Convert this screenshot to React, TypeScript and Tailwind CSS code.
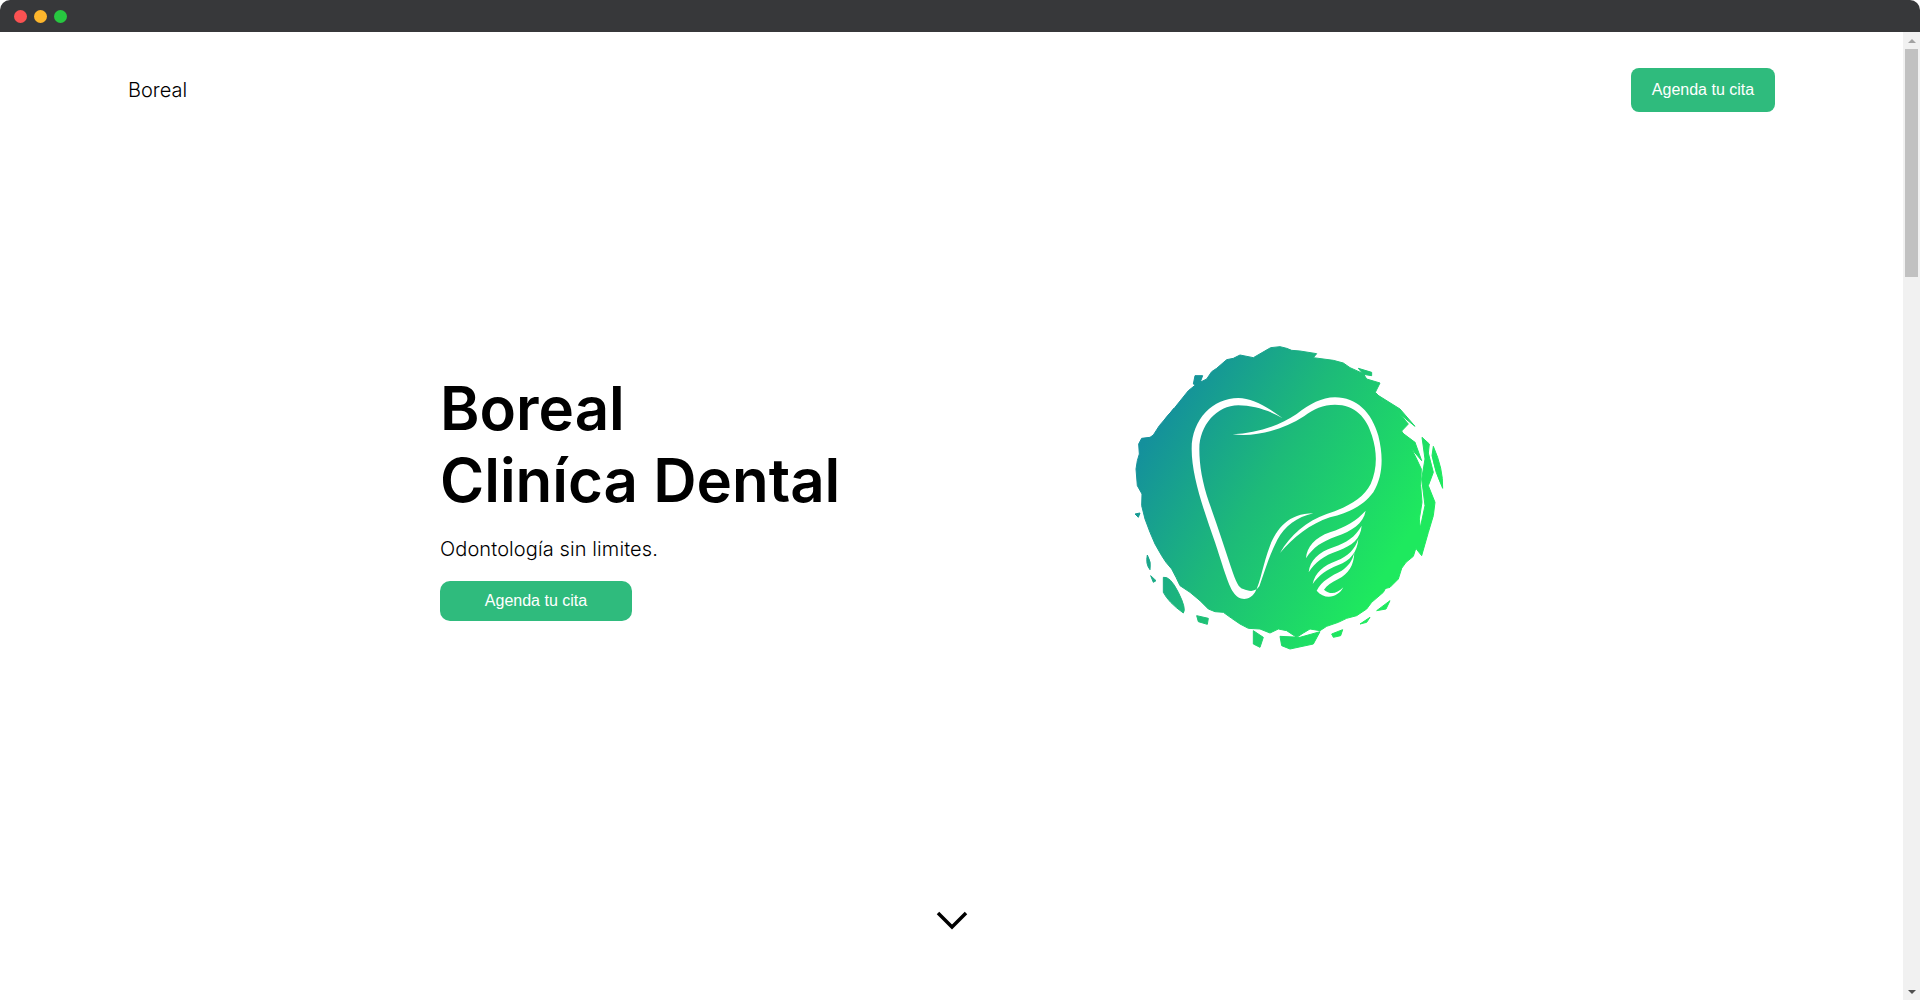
function CtaButton({ className }: { className: string }) {
    return (
        <button className={`bg-[#2fbb7d] text-white text-base font-['Liberation_Sans',Arial,sans-serif] ${className}`}>
            Agenda tu cita
        </button>
    );
}

// traced by hand from the logo, coordinates are 3x the on-screen pixels
function BorealLogo() {
    return (
        <svg viewBox="0 0 1110 990" className="w-[370px] h-[330px] shrink-0">
            <defs>
                <linearGradient id="boreal" gradientUnits="userSpaceOnUse" x1="190" y1="240" x2="900" y2="660">
                    <stop offset="0" stopColor="#14909c" />
                    <stop offset="0.45" stopColor="#1dba79" />
                    <stop offset="1" stopColor="#1ee95e" />
                </linearGradient>
            </defs>
            <g fill="url(#boreal)" stroke="url(#boreal)" strokeWidth="3" strokeLinejoin="round">
                <path d="M498 64 L512 56 L540 53 L560 58 L575 64 L600 66 L650 74 L640 86 L700 94 L730 102 L750 116 L790 134 L800 150 L840 162 L826 190 L850 215 L880 236 L895 250 L925 285 L905 306 L925 340 L950 390 L964 420 L962 470 L966 520 L958 570 L962 610 L950 650 L940 682 L918 700 L905 718 L880 750 L862 768 L850 790 L815 820 L800 840 L770 860 L740 868 L715 880 L680 892 L660 905 L630 900 L610 912 L590 925 L560 905 L535 900 L510 912 L480 900 L445 898 L420 885 L395 868 L370 850 L345 848 L325 840 L300 815 L270 790 L240 770 L228 745 L215 720 L198 700 L185 680 L165 645 L150 610 L135 570 L125 530 L126 495 L112 470 L108 420 L112 395 L118 375 L116 345 L125 328 L150 325 L160 318 L178 290 L195 270 L225 235 L245 210 L265 185 L290 165 L320 150 L335 128 L350 118 L380 92 L400 88 L420 78 L460 86 Z" />
                <path d="M1000 352 Q1030 420 1028 478 Q1005 430 996 380 Z" />
                <path d="M966 325 L988 345 L985 372 L1000 430 L985 470 L1005 520 L1000 560 L985 610 L965 680 L945 655 L960 600 L975 530 L965 450 L975 390 Z" />
                <path d="M905 310 L945 340 L965 395 L935 360 Z" />
                <path d="M142 678 Q155 700 150 722 Q136 705 142 678 Z" />
                <path d="M152 740 L168 755 L160 760 Z" />
                <path d="M190 745 Q210 740 235 790 Q260 840 250 852 Q205 820 190 790 Z" />
                <path d="M290 860 L325 868 L322 886 L295 878 Z" />
                <path d="M285 140 L308 140 L295 175 L280 165 Z" />
                <path d="M195 270 L222 238 L210 265 L192 285 Z" />
                <path d="M460 905 L490 925 L480 955 L460 945 Z" />
                <path d="M540 922 L600 925 L660 908 L640 945 L570 960 L545 950 Z" />
                <path d="M695 915 L728 902 L722 920 L700 925 Z" />
                <path d="M775 118 L815 130 L815 140 L790 136 Z" />
                <path d="M700 155 L735 165 L725 172 Z" />
                <path d="M830 845 L870 815 L858 840 Z" />
                <path d="M780 885 L810 865 L800 880 Z" />
                <path d="M850 780 L905 718 L895 750 L870 775 Z" />
                <path d="M105 555 L120 552 L115 565 Z" />
                <path d="M828 195 L900 240 L945 292 L880 240 Z" />
            </g>
            <g fill="#fff">
                <path d="M548 268 C500 232 455 207 415 207 C340 207 275 270 275 360 C275 440 310 540 345 640 C365 700 385 770 400 790 C415 815 448 818 465 790 C482 760 490 700 510 650 C530 600 565 553 640 553 C590 564 555 592 532 632 C508 678 494 728 478 772 C464 792 445 786 430 780 C416 778 408 760 392 712 C372 650 352 590 327 520 C307 460 298 410 298 360 C298 290 350 229 415 229 C460 229 510 245 548 268 Z" />
                <path d="M398 316 C470 312 540 290 590 255 C630 225 665 205 705 205 C770 205 815 250 835 320 C850 380 850 440 820 490 C790 530 750 550 690 565 C630 585 580 625 540 672 C570 620 620 575 680 555 C740 535 790 510 812 465 C832 420 832 370 816 320 C800 265 765 227 705 227 C670 227 640 240 612 262 C550 302 470 325 398 316 Z" />
                <path d="M618 688 C620 655 645 625 690 610 C735 595 770 575 797 545 C790 585 755 605 710 622 C665 638 640 655 618 688 Z" />
                <path d="M626 730 C630 695 655 670 700 655 C740 640 765 625 785 590 C782 630 755 650 715 665 C670 680 645 700 626 730 Z" />
                <path d="M638 765 C645 730 670 710 710 695 C745 682 765 660 775 630 C772 670 750 695 715 708 C680 722 655 740 638 765 Z" />
                <path d="M650 785 C665 755 695 740 725 725 C745 712 758 695 763 670 C762 710 745 735 715 750 C695 760 680 770 672 782 C690 798 710 795 730 775 C715 805 675 815 650 785 Z" />
            </g>
        </svg>
    );
}

function Scrollbar() {
    return (
        <div className="w-[17px] shrink-0 bg-[#f1f1f1] flex flex-col items-center">
            <svg viewBox="0 0 8 4" className="w-[8px] h-[4px] mt-[7px] mb-[6px] fill-[#a3a3a3]">
                <path d="M4 0 L8 4 L0 4 Z" />
            </svg>
            <div className="w-[13px] h-[228px] bg-[#c1c1c1]" />
            <svg viewBox="0 0 8 4" className="w-[8px] h-[4px] mt-auto mb-[6px] fill-[#505050]">
                <path d="M0 0 L8 0 L4 4 Z" />
            </svg>
        </div>
    );
}

export default function App() {
    return (
        <div className="h-screen overflow-hidden bg-white flex flex-col font-['Inter',sans-serif] text-black">
            <div className="h-8 shrink-0 bg-[#37383a] rounded-t-[10px] flex items-center gap-[7px] pl-[14px]">
                <span className="w-[13px] h-[13px] rounded-full bg-[#fb5252]" />
                <span className="w-[13px] h-[13px] rounded-full bg-[#fdb62c]" />
                <span className="w-[13px] h-[13px] rounded-full bg-[#27c740]" />
            </div>
            <div className="flex-1 min-h-0 flex">
                <main className="flex-1 min-w-0 flex flex-col">
                    <nav className="flex items-center justify-between px-[128px] py-9">
                        <span className="text-xl font-light leading-7">Boreal</span>
                        <CtaButton className="w-[144px] h-11 rounded-lg" />
                    </nav>
                    <section className="flex items-center pl-[440px] mt-[181px]">
                        <div className="w-[660px] shrink-0 pt-1">
                            <h1 className="text-[60px] leading-[72px] font-semibold">
                                Boreal
                                <br />
                                Cliníca Dental
                            </h1>
                            <p className="text-xl font-light leading-7 mt-[19px] tracking-[0.1px]">Odontología sin limites.</p>
                            <CtaButton className="w-[192px] h-10 rounded-[10px] mt-[18px]" />
                        </div>
                        <BorealLogo />
                    </section>
                    <div className="flex justify-center mt-auto pb-[70px]">
                        <svg viewBox="0 0 32 19" className="w-8 h-[19px]" fill="none" stroke="#000" strokeWidth="3.5">
                            <path d="M2 2 L16 16 L30 2" />
                        </svg>
                    </div>
                </main>
                <Scrollbar />
            </div>
        </div>
    );
}
